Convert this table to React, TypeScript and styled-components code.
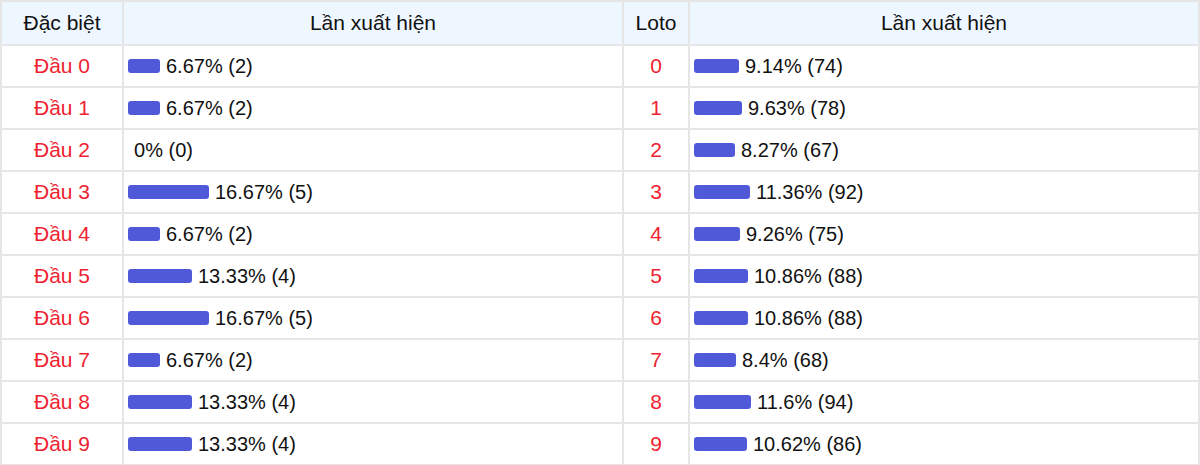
import React from "react";
import styled, { createGlobalStyle } from "styled-components";

const Global = createGlobalStyle`
  html, body { margin: 0; padding: 0; background: #fff; }
  body { font-family: "Liberation Sans", Arial, sans-serif; }
`;

const Table = styled.table`
  width: 1200px;
  border-collapse: collapse;
  table-layout: fixed;
  font-size: 20px;
  color: #111;
`;

const HeadCell = styled.th`
  background: #eef6ff;
  font-weight: normal;
  font-size: 21px;
  height: 42px;
  padding: 0;
  border: 2px solid #e6e6e6;
  text-align: center;
`;

const LabelCell = styled.td`
  color: #ee2230;
  font-size: 21px;
  text-align: center;
  height: 40px;
  padding: 0;
  border: 2px solid #e6e6e6;
`;

const BarCell = styled.td`
  height: 40px;
  padding: 0 0 0 4px;
  border: 2px solid #e6e6e6;
`;

const BarWrap = styled.div`
  display: flex;
  align-items: center;
  gap: 6px;
`;

const Bar = styled.div`
  height: 14px;
  border-radius: 3px;
  background: #505ad9;
  flex: none;
`;

const left = [
  [6.67, 2],
  [6.67, 2],
  [0, 0],
  [16.67, 5],
  [6.67, 2],
  [13.33, 4],
  [16.67, 5],
  [6.67, 2],
  [13.33, 4],
  [13.33, 4],
];
const right = [
  [9.14, 74],
  [9.63, 78],
  [8.27, 67],
  [11.36, 92],
  [9.26, 75],
  [10.86, 88],
  [10.86, 88],
  [8.4, 68],
  [11.6, 94],
  [10.62, 86],
];

function BarValue({ pct, n, scale }: { pct: number; n: number; scale: number }) {
  return (
    <BarWrap>
      <Bar style={{ width: Math.round(pct * scale) }} />
      <span>
        {pct}% ({n})
      </span>
    </BarWrap>
  );
}

export default function App() {
  return (
    <>
      <Global />
      <Table>
        <colgroup>
          <col style={{ width: 122 }} />
          <col style={{ width: 500 }} />
          <col style={{ width: 66 }} />
          <col />
        </colgroup>
        <thead>
          <tr>
            <HeadCell>Đặc biệt</HeadCell>
            <HeadCell>Lần xuất hiện</HeadCell>
            <HeadCell>Loto</HeadCell>
            <HeadCell>Lần xuất hiện</HeadCell>
          </tr>
        </thead>
        <tbody>
          {left.map((l, i) => (
            <tr key={i}>
              <LabelCell>Đầu {i}</LabelCell>
              <BarCell>
                <BarValue pct={l[0]} n={l[1]} scale={4.83} />
              </BarCell>
              <LabelCell>{i}</LabelCell>
              <BarCell>
                <BarValue pct={right[i][0]} n={right[i][1]} scale={4.95} />
              </BarCell>
            </tr>
          ))}
        </tbody>
      </Table>
    </>
  );
}
